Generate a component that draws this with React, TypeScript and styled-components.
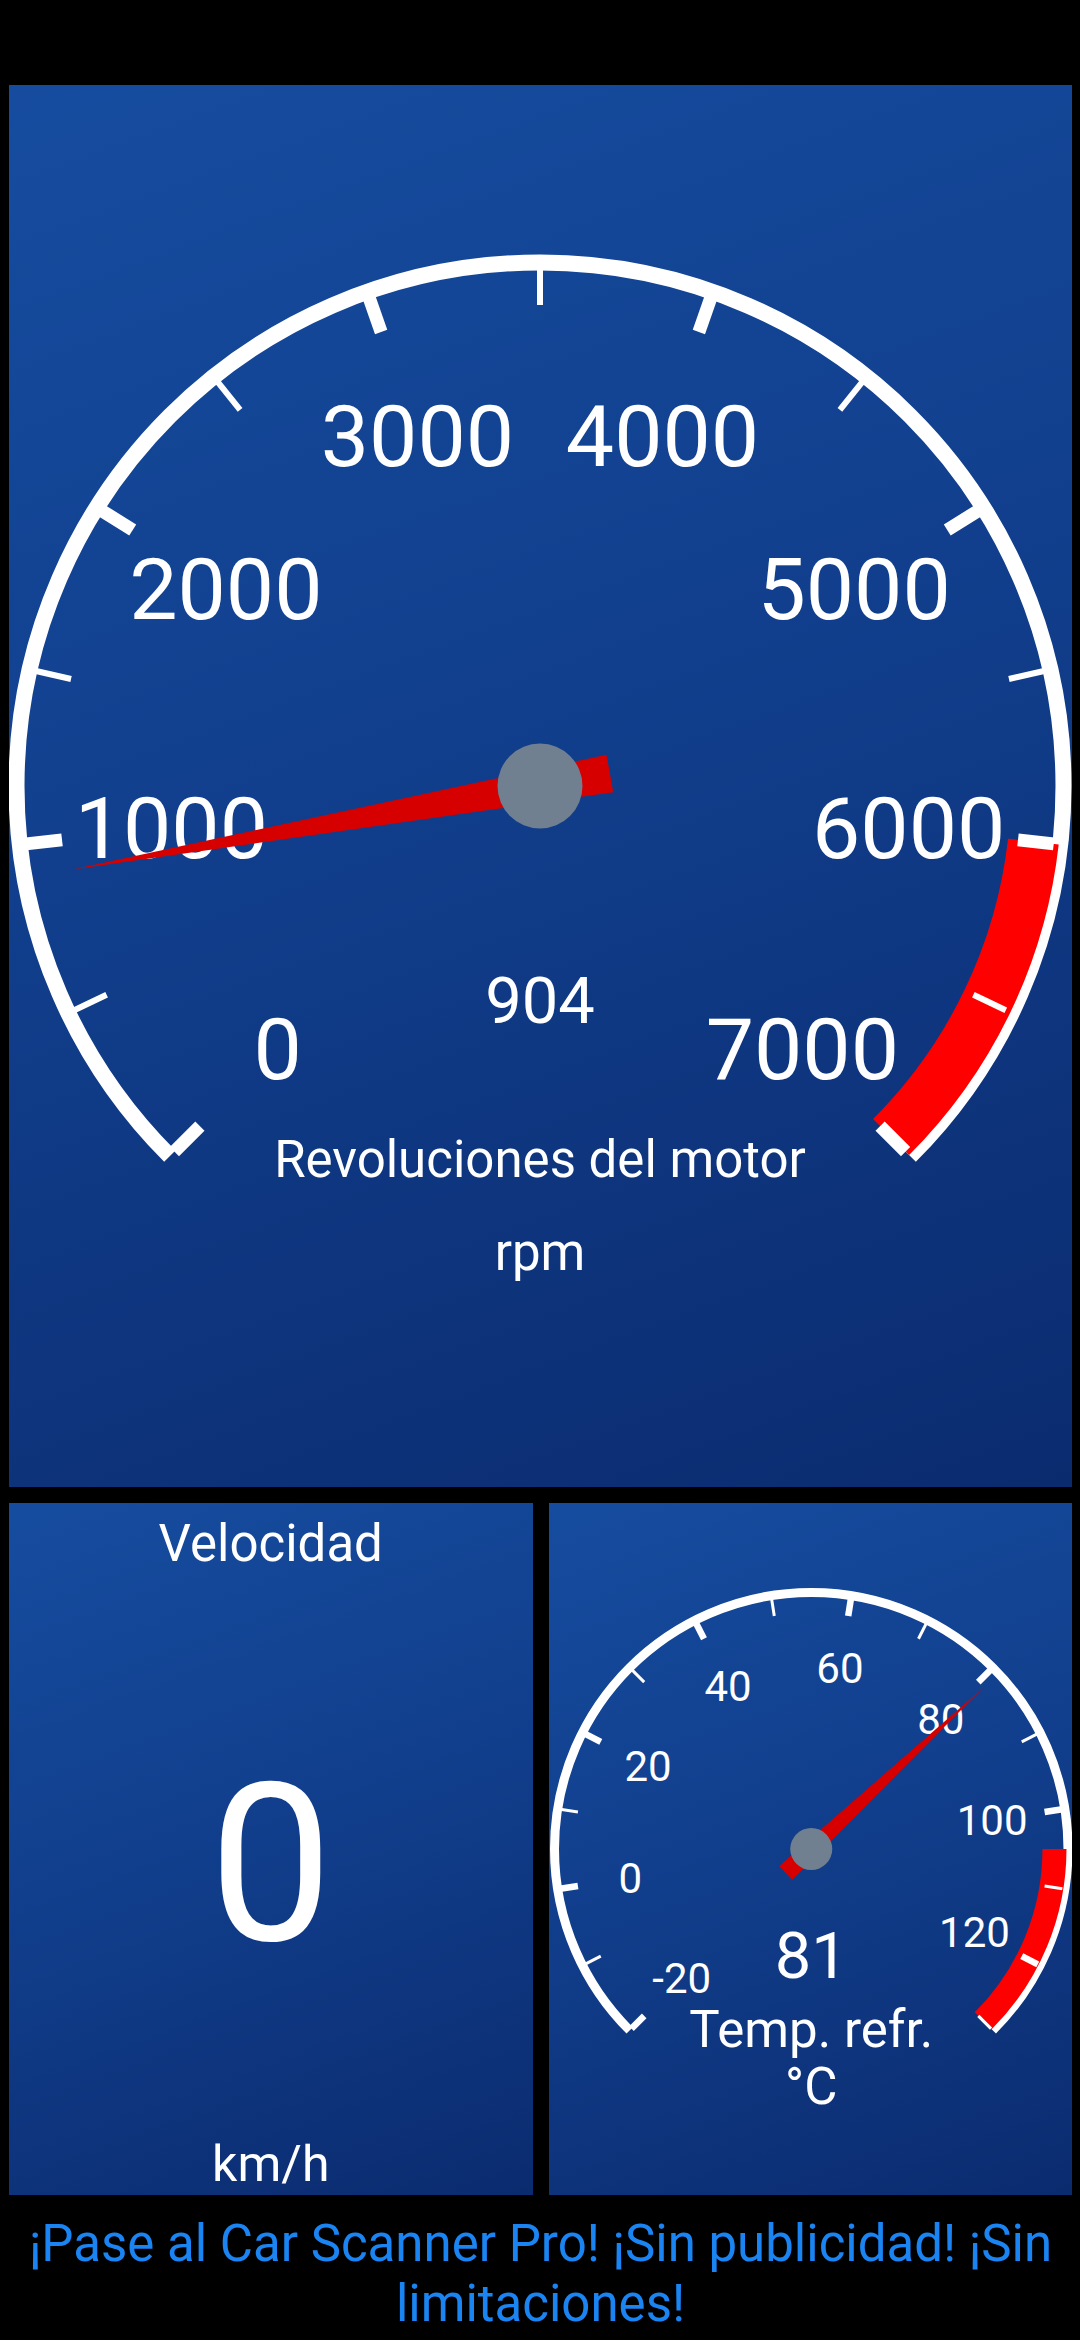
import React from 'react';
import styled, { createGlobalStyle } from 'styled-components';

const GlobalStyle = createGlobalStyle`
  html, body {
    margin: 0;
    padding: 0;
    background: #000;
  }
  body {
    font-family: Roboto, "Noto Sans", "Liberation Sans", sans-serif;
  }
`;

const Screen = styled.div`
  width: 1080px;
  height: 2340px;
  box-sizing: border-box;
  padding: 85px 8px 0 9px;
  display: flex;
  flex-direction: column;
  background: #000;
  overflow: hidden;
`;

const Dashboard = styled.div`
  display: flex;
  flex-direction: column;
  gap: 16px;
`;

const Row = styled.div`
  display: grid;
  grid-template-columns: 1fr 1fr;
  gap: 16px;
  height: 692px;
`;

const Panel = styled.div<{ $h?: number }>`
  position: relative;
  height: ${(p) => (p.$h ? `${p.$h}px` : '100%')};
  background: linear-gradient(160deg, #164c9f 0%, #113f8d 45%, #0b2b6f 100%);
  overflow: hidden;
  color: #fff;
`;

const DialSvg = styled.svg`
  display: block;
  width: 100%;
  height: 100%;
`;

const TickLabel = styled.text<{ $size: number }>`
  font-family: Roboto, "Noto Sans", sans-serif;
  font-size: ${(p) => p.$size}px;
  fill: #fff;
`;

const Readout = styled.text<{ $size: number }>`
  font-family: Roboto, "Noto Sans", sans-serif;
  font-size: ${(p) => p.$size}px;
  fill: #fff;
`;

const DigitalPanel = styled(Panel)`
  display: flex;
  flex-direction: column;
  align-items: center;
  box-sizing: border-box;
  padding: 11px 0 2px;
`;

const DigitalTitle = styled.div`
  font-size: 51px;
  line-height: normal;
  color: #fff;
`;

const DigitalValue = styled.div`
  flex: 1;
  display: flex;
  align-items: center;
  justify-content: center;
  font-size: 220px;
  line-height: 1;
  padding-top: 22px;
  color: #fff;
`;

const DigitalUnit = styled.div`
  font-size: 50px;
  line-height: normal;
  color: #fff;
`;

const Banner = styled.div`
  padding: 19px 4px 0;
  text-align: center;
  color: #1a84f2;
  font-size: 51px;
  line-height: 60px;
`;

type GaugeSpec = {
  w: number;
  h: number;
  cx: number;
  cy: number;
  min: number;
  max: number;
  minor: number;
  major: number;
  r: number;
  arcW: number;
  tickIn: number;
  tickOut: number;
  thickW: number;
  thinW: number;
  labelR: number;
  labelSize: number;
  redFrom: number;
  redIn: number;
  redOut: number;
  needleTail: number;
  needleHalf: number;
  needleTip: number;
  hubR: number;
  value: number;
  valueText: string;
  valueY: number;
  valueSize: number;
  title: string;
  titleY: number;
  unit: string;
  unitY: number;
  textSize: number;
};

const polar = (cx: number, cy: number, r: number, deg: number) => {
  const a = (deg * Math.PI) / 180;
  return { x: cx + r * Math.sin(a), y: cy - r * Math.cos(a) };
};

const arcPath = (cx: number, cy: number, r: number, a1: number, a2: number) => {
  const p1 = polar(cx, cy, r, a1);
  const p2 = polar(cx, cy, r, a2);
  const large = a2 - a1 > 180 ? 1 : 0;
  return `M ${p1.x} ${p1.y} A ${r} ${r} 0 ${large} 1 ${p2.x} ${p2.y}`;
};

const Gauge: React.FC<{ s: GaugeSpec }> = ({ s }) => {
  const ang = (v: number) => -135 + ((v - s.min) / (s.max - s.min)) * 270;
  const ticks: { v: number; major: boolean }[] = [];
  for (let v = s.min; v <= s.max + 1e-6; v += s.minor) {
    ticks.push({ v, major: Math.abs((v - s.min) % s.major) < 1e-6 });
  }
  const labels = ticks.filter((t) => t.major);
  const needleAngle = ang(s.value);
  const redR = (s.redIn + s.redOut) / 2;
  return (
    <DialSvg viewBox={`0 0 ${s.w} ${s.h}`} preserveAspectRatio="none">
      <path
        d={arcPath(s.cx, s.cy, s.r, -135, 135)}
        fill="none"
        stroke="#fff"
        strokeWidth={s.arcW}
      />
      <path
        d={arcPath(s.cx, s.cy, redR, ang(s.redFrom), 135)}
        fill="none"
        stroke="#ff0000"
        strokeWidth={s.redOut - s.redIn}
      />
      {ticks.map((t) => {
        const a = ang(t.v);
        const p1 = polar(s.cx, s.cy, s.tickIn, a);
        const p2 = polar(s.cx, s.cy, s.tickOut, a);
        return (
          <line
            key={`t${t.v}`}
            x1={p1.x}
            y1={p1.y}
            x2={p2.x}
            y2={p2.y}
            stroke="#fff"
            strokeWidth={t.major ? s.thickW : s.thinW}
          />
        );
      })}
      {labels.map((t) => {
        const p = polar(s.cx, s.cy, s.labelR, ang(t.v));
        return (
          <TickLabel
            key={`l${t.v}`}
            $size={s.labelSize}
            x={p.x}
            y={p.y}
            dy="0.355em"
            textAnchor="middle"
          >
            {t.v}
          </TickLabel>
        );
      })}
      <Readout $size={s.valueSize} x={s.cx} y={s.valueY} textAnchor="middle">
        {s.valueText}
      </Readout>
      <Readout $size={s.textSize} x={s.cx} y={s.titleY} textAnchor="middle">
        {s.title}
      </Readout>
      <Readout $size={s.textSize} x={s.cx} y={s.unitY} textAnchor="middle">
        {s.unit}
      </Readout>
      <polygon
        points={`${s.cx - s.needleHalf},${s.cy + s.needleTail} ${s.cx + s.needleHalf},${s.cy + s.needleTail} ${s.cx},${s.cy - s.needleTip}`}
        fill="#d60000"
        transform={`rotate(${needleAngle} ${s.cx} ${s.cy})`}
      />
      <circle cx={s.cx} cy={s.cy} r={s.hubR} fill="#708090" />
    </DialSvg>
  );
};

const rpmGauge: GaugeSpec = {
  w: 1063,
  h: 1402,
  cx: 531,
  cy: 701,
  min: 0,
  max: 7000,
  minor: 500,
  major: 1000,
  r: 523.5,
  arcW: 16,
  tickIn: 481,
  tickOut: 517,
  thickW: 13,
  thinW: 6,
  labelR: 371,
  labelSize: 86,
  redFrom: 6000,
  redIn: 471,
  redOut: 522,
  needleTail: 71,
  needleHalf: 19,
  needleTip: 475,
  hubR: 42.5,
  value: 904,
  valueText: '904',
  valueY: 938,
  valueSize: 65,
  title: 'Revoluciones del motor',
  titleY: 1092,
  unit: 'rpm',
  unitY: 1185,
  textSize: 51,
};

const tempGauge: GaugeSpec = {
  w: 523,
  h: 692,
  cx: 262,
  cy: 346,
  min: -20,
  max: 130,
  minor: 10,
  major: 20,
  r: 256.5,
  arcW: 9,
  tickIn: 236,
  tickOut: 254,
  thickW: 6.5,
  thinW: 3,
  labelR: 183,
  labelSize: 42,
  redFrom: 105,
  redIn: 231,
  redOut: 255,
  needleTail: 35,
  needleHalf: 9.5,
  needleTip: 236,
  hubR: 21,
  value: 81,
  valueText: '81',
  valueY: 475,
  valueSize: 65,
  title: 'Temp. refr.',
  titleY: 544,
  unit: '°C',
  unitY: 601,
  textSize: 51,
};

export default function App() {
  return (
    <>
      <GlobalStyle />
      <Screen>
        <Dashboard>
          <Panel $h={1402}>
            <Gauge s={rpmGauge} />
          </Panel>
          <Row>
            <DigitalPanel>
              <DigitalTitle>Velocidad</DigitalTitle>
              <DigitalValue>0</DigitalValue>
              <DigitalUnit>km/h</DigitalUnit>
            </DigitalPanel>
            <Panel>
              <Gauge s={tempGauge} />
            </Panel>
          </Row>
        </Dashboard>
        <Banner>¡Pase al Car Scanner Pro! ¡Sin publicidad! ¡Sin limitaciones!</Banner>
      </Screen>
    </>
  );
}
